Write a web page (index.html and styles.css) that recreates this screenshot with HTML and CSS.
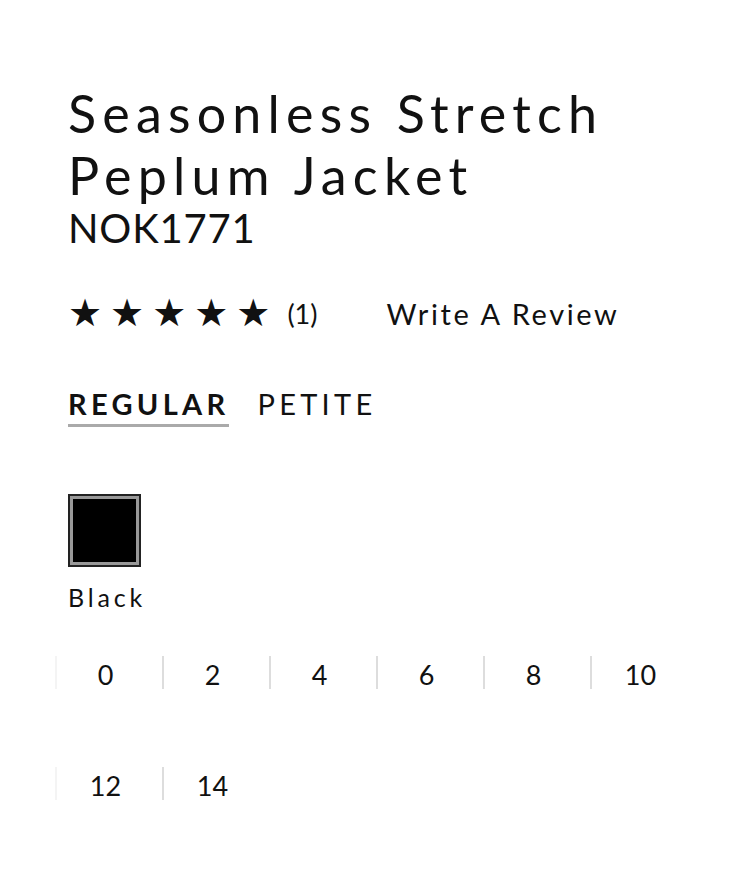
FILE: index.html
```html
<!DOCTYPE html>
<html>
<head>
<meta charset="utf-8">
<link rel="stylesheet" href="styles.css">
</head>
<body>
<main class="product">
  <h1 class="title">Seasonless Stretch Peplum Jacket</h1>
  <div class="sku">NOK1771</div>
  <div class="reviews">
    <div class="stars">
      <span class="star">★</span><span class="star">★</span><span class="star">★</span><span class="star">★</span><span class="star">★</span>
    </div>
    <span class="count">(1)</span>
    <a class="write">Write A Review</a>
  </div>
  <div class="fits">
    <span class="fit active">REGULAR</span>
    <span class="fit">PETITE</span>
  </div>
  <div class="colors">
    <div class="swatch"><div class="chip"></div></div>
    <div class="color-name">Black</div>
  </div>
  <div class="sizes">
    <span class="size">0</span>
    <span class="size">2</span>
    <span class="size">4</span>
    <span class="size">6</span>
    <span class="size">8</span>
    <span class="size">10</span>
    <span class="size">12</span>
    <span class="size">14</span>
  </div>
</main>
</body>
</html>
```
FILE: styles.css
```css
html, body {
  margin: 0;
  padding: 0;
  background: #fff;
}
body {
  font-family: "Lato", "Open Sans", sans-serif;
  color: #111;
}
.product {
  padding: 82px 0 0 68px;
  width: 640px;
}
.title {
  margin: 0;
  font-weight: 400;
  font-size: 52px;
  line-height: 62px;
  letter-spacing: 6.2px;
  width: 600px;
}
.sku {
  font-size: 40px;
  line-height: 52px;
  letter-spacing: 0.8px;
  margin-top: -4px;
}
.reviews {
  display: flex;
  align-items: center;
  margin-top: 39px;
  height: 40px;
}
.stars {
  display: flex;
  gap: 8px;
}
.star {
  font-family: "DejaVu Sans", sans-serif;
  font-size: 38px;
  line-height: 40px;
}
.count {
  font-size: 27px;
  margin-left: 17px;
}
.write {
  font-size: 29px;
  letter-spacing: 2.6px;
  margin-left: 69px;
}
.fits {
  display: flex;
  gap: 28px;
  margin-top: 53px;
}
.fit {
  font-size: 29px;
  letter-spacing: 4.3px;
  line-height: 36px;
  padding-bottom: 2px;
}
.fit.active {
  font-weight: 700;
  border-bottom: 3px solid #aaa;
}
.colors {
  margin-top: 67px;
}
.swatch {
  border: 2px solid #222;
  padding: 3px;
  box-sizing: border-box;
  background: #999;
  width: 73px;
  height: 73px;
}
.chip {
  width: 100%;
  height: 100%;
  background: #000;
}
.color-name {
  font-size: 25px;
  letter-spacing: 3.8px;
  margin-top: 15px;
}
.sizes {
  display: grid;
  grid-template-columns: repeat(6, 107px);
  row-gap: 78px;
  margin-top: 44px;
  margin-left: -13px;
}
.size {
  border-left: 2px solid #ddd;
  height: 33px;
  box-sizing: border-box;
  display: flex;
  align-items: center;
  justify-content: center;
  padding: 4px 8px 0 0;
  font-size: 27px;
}
.size:nth-child(6n+1) {
  border-left-color: #f4f4f4;
}
```
